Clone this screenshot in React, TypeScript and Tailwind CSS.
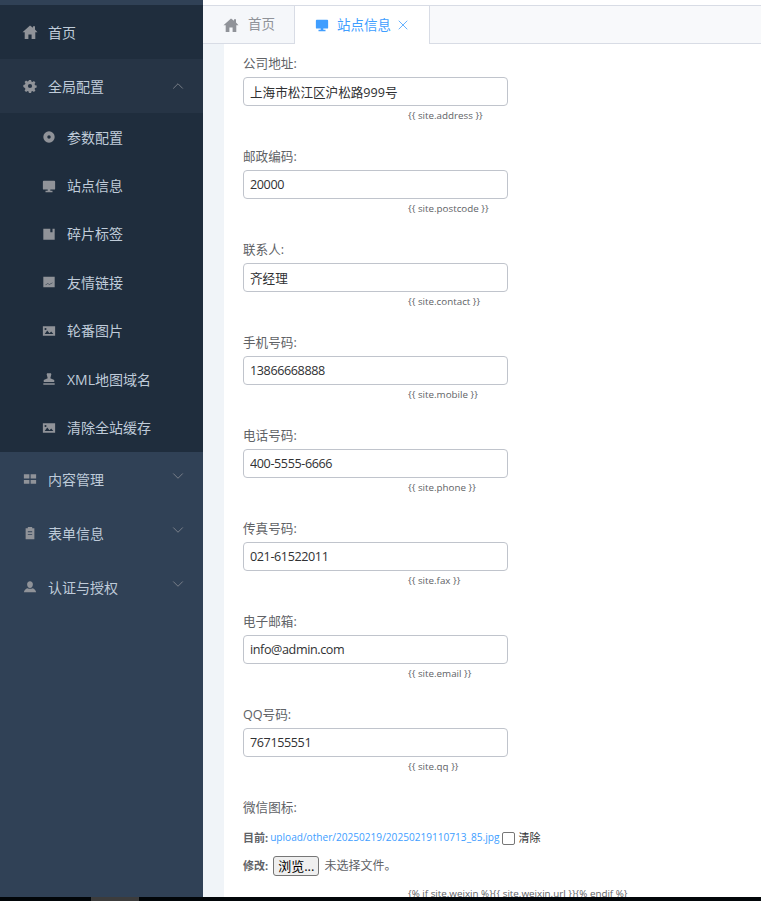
import { ChevronDown, ChevronUp, X } from "lucide-react";
import type { ReactNode } from "react";

const font = "font-['Open_Sans','Noto_Sans_CJK_SC',sans-serif]";

// element-ui style solid icons, drawn by hand
const icons: Record<string, ReactNode> = {
  home: <path d="M8 1.500 0.500 8.300h2.200V15h3.700v-4.600h3.200V15h3.700V8.300h2.200L13 5.600V2.200h-2v1.600z" />,
  gear: <path fillRule="evenodd" d="M6.800 1h2.400l.4 1.800 1.300.6 1.600-1 1.700 1.700-1 1.600.6 1.300 1.800.4v2.400l-1.800.4-.6 1.300 1 1.600-1.700 1.700-1.600-1-1.300.6-.4 1.800H6.800l-.4-1.800-1.300-.6-1.600 1-1.700-1.700 1-1.600-.6-1.300L.4 9.200V6.800l1.800-.4.6-1.300-1-1.600 1.700-1.700 1.600 1 1.300-.6zM8 5.600a2.400 2.400 0 1 0 0 4.800 2.400 2.400 0 0 0 0-4.800z" />,
  circle: <path fillRule="evenodd" d="M8 1.500a6.500 6.500 0 1 1 0 13 6.500 6.500 0 0 1 0-13zM8 6a2 2 0 1 0 0 4 2 2 0 0 0 0-4z" />,
  monitor: <path d="M2 2h12a1 1 0 0 1 1 1v8a1 1 0 0 1-1 1H9.500v1.500H12V15H4v-1.500h2.500V12H2a1 1 0 0 1-1-1V3a1 1 0 0 1 1-1z" />,
  box: <path fillRule="evenodd" d="M1.500 2h13v12.500h-13zM9.500 2v4h2.500V2z" />,
  chart: <path fillRule="evenodd" d="M1.500 2h13v12h-13zM4 11l2.500-1.500 2 1 3.500-2v.6l-3.500 2-2-1L4 11.600z" />,
  image: <path fillRule="evenodd" d="M1 2.500h14v11H1zM3 11.500h10L10.500 8.500 8.500 10.500 6 7.500zM4 4.500a1.200 1.200 0 1 0 0 2.400 1.200 1.200 0 0 0 0-2.400z" />,
  stamp: <path d="M5.800 1.500h4.400l.5 1-1.200 4.500 4.500 2v2.500H2V9l4.500-2-1.200-4.500zM1.500 12.800h13v1.700h-13z" />,
  grid: <path d="M1 2.500h6.300v5H1zM8.700 2.500H15v5H8.700zM1 9h6.300v4.500H1zM8.700 9H15v4.500H8.700z" />,
  clip: <path d="M5.500 1h5v1.500h2.500V15H3V2.500h2.500zM5.500 6v1h5V6zM5.500 9v1h5V9z" />,
  user: <path d="M8 1.500c2 0 3.300 1.500 3.300 3.500S10 9 8 9 4.700 7 4.700 5 6 1.500 8 1.500zM5 9.300c1.800 1 4.200 1 6 0 2 .7 3.500 2 4 4.700H1c.5-2.700 2-4 4-4.700z" />,
};

function Icon({ name, size, className }: { name: string; size: number; className?: string }) {
  return (
    <svg viewBox="0 0 16 16" width={size} height={size} fill="currentColor" className={`shrink-0 ${className ?? ""}`}>
      {icons[name]}
    </svg>
  );
}

function TopItem({ icon, label, open, active, home }: { icon: string; label: string; open?: boolean; active?: boolean; home?: boolean }) {
  const collapsed = open === false;
  return (
    <div className={`flex h-[54px] items-center pl-[22px] pr-[16px] text-[14px] text-[#bfcbd9] ${active ? "bg-[#263445]" : ""} ${collapsed ? "pt-[1px]" : ""}`}>
      <span className="flex w-[15px] justify-center">
        <Icon name={icon} size={home ? 16 : 14} className="text-[#909399]" />
      </span>
      <span className="ml-[11px] flex-1">{label}</span>
      {open === undefined ? null : open ? (
        <ChevronUp size={18} strokeWidth={1} className="text-[#909399]" />
      ) : (
        <ChevronDown size={18} strokeWidth={1} className="-mt-[6px] text-[#909399]" />
      )}
    </div>
  );
}

function SubItem({ icon, label }: { icon: string; label: string }) {
  return (
    <div className="flex h-[48.4px] items-center pl-[43px] text-[14px] text-[#bfcbd9]">
      <span className="flex w-[12px] justify-center">
        <Icon name={icon} size={14} className="text-[#909399]" />
      </span>
      <span className="ml-[12px]">{label}</span>
    </div>
  );
}

function Field({ label, value, hint }: { label: string; value: string; hint: string }) {
  // Latin text runs a little wide in Open Sans, tighten it
  const latin = /^[\x00-\x7f]+$/.test(value);
  return (
    <div className="h-[93px]">
      <div className="h-[24px] text-[12.6px] leading-[25px] text-[#606266]">{label}:</div>
      <input
        readOnly
        value={value}
        className={`mt-[2px] block h-[29px] w-[265px] rounded-[4px] border border-[#c0c4cc] bg-white px-[6px] text-[12.6px] text-[#303133] outline-none ${latin ? "tracking-[-0.4px]" : ""}`}
      />
      <div className="mt-[3px] pl-[165px] text-[9.8px] leading-[14px] text-[#606266]">{hint}</div>
    </div>
  );
}

const subItems = [
  { icon: "circle", label: "参数配置" },
  { icon: "monitor", label: "站点信息" },
  { icon: "box", label: "碎片标签" },
  { icon: "chart", label: "友情链接" },
  { icon: "image", label: "轮番图片" },
  { icon: "stamp", label: "XML地图域名" },
  { icon: "image", label: "清除全站缓存" },
];

const fields = [
  { label: "公司地址", value: "上海市松江区沪松路999号", hint: "{{ site.address }}" },
  { label: "邮政编码", value: "20000", hint: "{{ site.postcode }}" },
  { label: "联系人", value: "齐经理", hint: "{{ site.contact }}" },
  { label: "手机号码", value: "13866668888", hint: "{{ site.mobile }}" },
  { label: "电话号码", value: "400-5555-6666", hint: "{{ site.phone }}" },
  { label: "传真号码", value: "021-61522011", hint: "{{ site.fax }}" },
  { label: "电子邮箱", value: "info@admin.com", hint: "{{ site.email }}" },
  { label: "QQ号码", value: "767155551", hint: "{{ site.qq }}" },
];

export default function App() {
  return (
    <div className={`${font} flex h-[901px] flex-col overflow-hidden bg-white`}>
      <div className="flex min-h-0 flex-1">
        {/* Sidebar */}
        <aside className="w-[203px] shrink-0 bg-[#304156] pt-[5px]">
          <div className="bg-[#1f2d3d]">
            <TopItem icon="home" label="首页" home />
          </div>
          <TopItem icon="gear" label="全局配置" active open />
          <div className="bg-[#1f2d3d]">
            {subItems.map((item) => (
              <SubItem key={item.label} {...item} />
            ))}
          </div>
          <TopItem icon="grid" label="内容管理" open={false} />
          <TopItem icon="clip" label="表单信息" open={false} />
          <TopItem icon="user" label="认证与授权" open={false} />
        </aside>

        {/* Main */}
        <main className="flex min-w-0 flex-1 flex-col bg-[#f0f4f8]">
          <div className="h-[5px] bg-white" />
          <div className="flex h-[39px] shrink-0 border-y border-[#d8dce5] bg-[#f8f9fb]">
            <div className="flex w-[91px] items-center bg-[#f5f7fa] pl-[20px] text-[13.5px] text-[#909399]">
              <Icon name="home" size={16} />
              <span className="ml-[9px]">首页</span>
            </div>
            <div className="-mb-px flex w-[136px] items-center border-x border-[#d8dce5] bg-white pl-[20px] text-[13.5px] text-[#409eff]">
              <Icon name="monitor" size={14} />
              <span className="ml-[8px]">站点信息</span>
              <X size={16} strokeWidth={1.2} className="ml-[4px] text-[#409eff]" />
            </div>
          </div>
          <div className="ml-[21px] min-h-0 flex-1 overflow-hidden bg-white pl-[19px]">
            <div className="pt-[7px]">
              {fields.map((f) => (
                <Field key={f.label} {...f} />
              ))}
            </div>
            <div className="text-[12.6px] leading-[25px] text-[#606266]">微信图标:</div>
            <div className="mt-[6px] flex h-[24px] items-center text-[11px] text-[#606266]">
              <b className="font-bold">目前:</b>
              <a className="ml-[2px] text-[10.1px] text-[#409eff]">upload/other/20250219/20250219110713_85.jpg</a>
              <input type="checkbox" readOnly className="ml-[3px] h-[13px] w-[13px] appearance-none rounded-[2px] border border-[#767676] bg-white" />
              <span className="ml-[3px] text-[#303133]">清除</span>
            </div>
            <div className="mt-[4px] flex h-[24px] items-center text-[11px] font-bold text-[#606266]">
              修改:
              <span className="ml-[5px] rounded-[3px] border border-[#767676] bg-[#efefef] px-[4px] text-[13px] leading-[18px] font-normal text-black">浏览...</span>
              <span className="ml-[5px] text-[12px] font-normal">未选择文件。</span>
            </div>
            <div className="mt-[9px] pl-[165px] text-[9.8px] leading-[14px] text-[#606266]">{"{% if site.weixin %}{{ site.weixin.url }}{% endif %}"}</div>
          </div>
        </main>
      </div>
      {/* horizontal scrollbar */}
      <div className="h-[4px] shrink-0 bg-[#020609] pl-[91px]">
        <div className="h-full w-[48px] bg-[#3c3c3c]" />
      </div>
    </div>
  );
}
